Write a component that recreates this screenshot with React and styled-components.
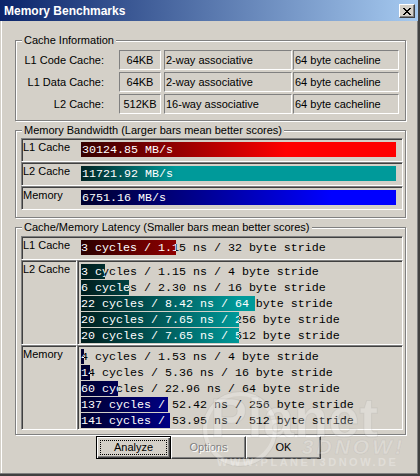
import React from "react";
import styled, { createGlobalStyle, css } from "styled-components";

const GlobalStyle = createGlobalStyle`
  html, body {
    margin: 0;
    padding: 0;
    background: #ffffff;
  }
  body {
    font-family: "Liberation Sans", Arial, sans-serif;
    font-size: 11px;
    color: #000;
  }
`;

// classic 3d edges
const sunken = css`
  box-sizing: border-box;
  border: 1px solid;
  border-color: #808080 #ffffff #ffffff #808080;
  box-shadow: inset 1px 1px 0 #404040, inset -1px -1px 0 #d4d0c8;
`;

const Window = styled.div`
  position: relative;
  width: 420px;
  height: 476px;
  box-sizing: border-box;
  background: #d4d0c8;
  border-right: 2px solid #404040;
  border-bottom: 2px solid #404040;
  box-shadow: inset -1px -1px 0 #808080, inset 1px 0 0 #d4d0c8, inset 2px 0 0 #ffffff;
  display: flex;
  flex-direction: column;
  overflow: hidden;
`;

const TitleBar = styled.div`
  height: 21px;
  box-sizing: border-box;
  padding: 0 3px 0 4px;
  display: flex;
  align-items: center;
  justify-content: space-between;
  background: linear-gradient(to right, #0a246a, #a6caf0);
`;

const Title = styled.span`
  color: #fff;
  font-weight: bold;
  font-size: 12px;
  line-height: 20px;
  padding-top: 1px;
`;

const CloseButton = styled.div`
  width: 16px;
  height: 14px;
  margin-top: 1px;
  box-sizing: border-box;
  background: #d4d0c8;
  border: 1px solid;
  border-color: #ffffff #404040 #404040 #ffffff;
  box-shadow: inset -1px -1px 0 #808080;
  display: flex;
  align-items: center;
  justify-content: center;
`;

const Content = styled.div`
  padding: 13px 12px 0 15px;
  display: flex;
  flex-direction: column;
  gap: 3px;
`;

const Group = styled.fieldset`
  margin: 0;
  padding: 0;
  min-width: 0;
  border: 1px solid #808080;
  box-shadow: inset 1px 1px 0 #ffffff, 1px 1px 0 #ffffff;
`;

const Legend = styled.legend`
  margin-left: 6px;
  padding: 0 2px;
  line-height: 13px;
  background: #d4d0c8;
`;

const GroupBody = styled.div`
  padding: ${(p) => p.$pad};
  display: flex;
  flex-direction: column;
  gap: ${(p) => p.$gap || 0}px;
`;

/* cache information */
const InfoRow = styled.div`
  display: flex;
  height: 20px;
`;

const InfoLabel = styled.div`
  width: 92px;
  padding-right: 4px;
  margin-right: 11px;
  box-sizing: border-box;
  text-align: right;
  line-height: 20px;
  white-space: nowrap;
`;

const InfoBox = styled.div`
  box-sizing: border-box;
  width: ${(p) => p.$w}px;
  margin-right: ${(p) => p.$gap || 0}px;
  border: 1px solid;
  border-color: #808080 #ffffff #ffffff #808080;
  padding: 0 1px;
  line-height: 18px;
  text-align: ${(p) => (p.$center ? "center" : "left")};
  white-space: nowrap;
  overflow: hidden;
`;

/* bars */
const Row = styled.div`
  ${sunken};
  display: flex;
  height: ${(p) => p.$h || 24}px;
`;

const Split = styled.div`
  display: flex;
`;

const Cell = styled.div`
  ${sunken};
  width: ${(p) => (p.$w ? `${p.$w}px` : "auto")};
  flex: ${(p) => (p.$w ? "none" : "1")};
  padding: ${(p) => p.$pad || 0};
`;

const RowLabel = styled.div`
  width: ${(p) => p.$w || 59}px;
  flex: none;
  box-sizing: border-box;
  padding: 2px 0 0 1px;
  line-height: 13px;
  white-space: nowrap;
`;

const mono = css`
  font-family: "Liberation Mono", "Courier New", monospace;
  font-size: 11.67px;
  white-space: nowrap;
`;

const Bar = styled.div`
  ${mono};
  width: 315px;
  height: 15px;
  margin-top: 3px;
  box-sizing: border-box;
  padding: 1px 0 0 1px;
  line-height: 15px;
  color: #fff;
  background: linear-gradient(to right, ${(p) => p.$from} 0px, ${(p) => p.$to} ${(p) => p.$span}px);
`;

const Lines = styled.div`
  padding-top: 3px;
`;

const Line = styled.div`
  ${mono};
  position: relative;
  height: 16px;
`;

const LineText = styled.div`
  height: 15px;
  box-sizing: border-box;
  padding-top: 1px;
  line-height: 15px;
  color: ${(p) => (p.$inverse ? "#fff" : "#000")};
`;

const Fill = styled.div`
  position: absolute;
  left: 0;
  top: 0;
  height: 15px;
  overflow: hidden;
  background: linear-gradient(to right, ${(p) => p.$from} 0px, ${(p) => p.$to} ${(p) => p.$span}px);
`;

/* buttons */
const ButtonRow = styled.div`
  display: flex;
  padding: 1px 0 0 96px;
`;

const Button = styled.div`
  position: relative;
  width: 75px;
  height: 23px;
  box-sizing: border-box;
  display: flex;
  align-items: center;
  justify-content: center;
  border: 1px solid;
  border-color: ${(p) => (p.$default ? "#000" : "#ffffff #404040 #404040 #ffffff")};
  box-shadow: ${(p) =>
    p.$default
      ? "inset 1px 1px 0 #ffffff, inset -1px -1px 0 #404040, inset -2px -2px 0 #808080"
      : "inset -1px -1px 0 #808080"};
  color: ${(p) => (p.$disabled ? "#808080" : "#000")};
  text-shadow: ${(p) => (p.$disabled ? "1px 1px 0 #ffffff" : "none")};
  line-height: 13px;
`;

const Focus = styled.div`
  position: absolute;
  inset: 3px;
  border: 1px dotted #000;
`;

/* watermark laid over the lower right of the dialog */
const Watermark = styled.div`
  position: absolute;
  left: 200px;
  top: 384px;
  width: 215px;
  height: 92px;
  pointer-events: none;
  font-family: "Liberation Sans", Arial, sans-serif;
  font-weight: bold;
  color: rgba(255, 255, 255, 0.24);
  -webkit-text-stroke: 1px rgba(110, 110, 110, 0.1);
`;

const Ring = styled.div`
  position: absolute;
  left: 3px;
  top: 8px;
  width: 66px;
  height: 66px;
  border-radius: 50%;
  border: 4px solid rgba(255, 255, 255, 0.26);
  box-shadow: 0 0 0 1px rgba(120, 120, 120, 0.1);
`;

const PlanetWord = styled.div`
  position: absolute;
  left: 10px;
  top: 6px;
  font-size: 56px;
  line-height: 56px;
`;

const Brand = styled.div`
  position: absolute;
  right: 10px;
  top: 52px;
  font-size: 21px;
  line-height: 21px;
  font-style: italic;
  letter-spacing: 3px;
`;

const Url = styled.div`
  position: absolute;
  left: 17px;
  top: 73px;
  font-size: 11px;
  line-height: 11px;
  letter-spacing: 2.5px;
  -webkit-text-stroke: 0;
  color: rgba(255, 255, 255, 0.3);
`;

const XGlyph = () => (
  <svg width="8" height="7" viewBox="0 0 8 7" shapeRendering="crispEdges">
    <path
      fill="#000"
      d="M0 0h2v1H0zM6 0h2v1H6zM1 1h2v1H1zM5 1h2v1H5zM2 2h4v1H2zM3 3h2v1H3zM2 4h4v1H2zM1 5h2v1H1zM5 5h2v1H5zM0 6h2v1H0zM6 6h2v1H6z"
    />
  </svg>
);

const cacheInfo = [
  ["L1 Code Cache:", "64KB", "2-way associative", "64 byte cacheline"],
  ["L1 Data Cache:", "64KB", "2-way associative", "64 byte cacheline"],
  ["L2 Cache:", "512KB", "16-way associative", "64 byte cacheline"],
];

const bandwidth = [
  { label: "L1 Cache", value: "30124.85 MB/s", from: "#340000", to: "#ff0000", span: 205 },
  { label: "L2 Cache", value: "11721.92 MB/s", from: "#002424", to: "#009a9a", span: 95 },
  { label: "Memory", value: "6751.16 MB/s", from: "#00002c", to: "#0000ff", span: 250 },
];

const red = { from: "#2a0000", to: "#ff0000", span: 200 };
const teal = { from: "#001c1c", to: "#009a9a", span: 160 };
const blue = { from: "#000030", to: "#0000ff", span: 220 };

const l2Lines = [
  ["3 cycles / 1.15 ns / 4 byte stride", 24],
  ["6 cycles / 2.30 ns / 16 byte stride", 48],
  ["22 cycles / 8.42 ns / 64 byte stride", 174],
  ["20 cycles / 7.65 ns / 256 byte stride", 158],
  ["20 cycles / 7.65 ns / 512 byte stride", 158],
];

const memLines = [
  ["4 cycles / 1.53 ns / 4 byte stride", 3],
  ["14 cycles / 5.36 ns / 16 byte stride", 9],
  ["60 cycles / 22.96 ns / 64 byte stride", 37],
  ["137 cycles / 52.42 ns / 256 byte stride", 87],
  ["141 cycles / 53.95 ns / 512 byte stride", 89],
];

const LatencyLine = ({ text, width, tone }) => (
  <Line>
    <LineText>{text}</LineText>
    <Fill $from={tone.from} $to={tone.to} $span={tone.span} style={{ width }}>
      <LineText $inverse>{text}</LineText>
    </Fill>
  </Line>
);

const LatencyBlock = ({ label, lines, tone }) => (
  <Split>
    <Cell $w={56}>
      <RowLabel $w={54}>{label}</RowLabel>
    </Cell>
    <Cell $pad="0 0 0 3px">
      <Lines>
        {lines.map(([text, w]) => (
          <LatencyLine key={text} text={text} width={w} tone={tone} />
        ))}
      </Lines>
    </Cell>
  </Split>
);

const App = () => {
  return (
    <>
      <GlobalStyle />
      <Window>
        <TitleBar>
          <Title>Memory Benchmarks</Title>
          <CloseButton>
            <XGlyph />
          </CloseButton>
        </TitleBar>

        <Content>
          <Group>
            <Legend>Cache Information</Legend>
            <GroupBody $pad="3px 0 6px 0" $gap={2}>
              {cacheInfo.map(([label, size, assoc, line]) => (
                <InfoRow key={label}>
                  <InfoLabel>{label}</InfoLabel>
                  <InfoBox $w={42} $gap={3} $center>{size}</InfoBox>
                  <InfoBox $w={128} $gap={1}>{assoc}</InfoBox>
                  <InfoBox $w={106}>{line}</InfoBox>
                </InfoRow>
              ))}
            </GroupBody>
          </Group>

          <Group>
            <Legend>Memory Bandwidth (Larger bars mean better scores)</Legend>
            <GroupBody $pad="1px 2px 7px 5px">
              {bandwidth.map((b) => (
                <Row key={b.label}>
                  <RowLabel>{b.label}</RowLabel>
                  <Bar $from={b.from} $to={b.to} $span={b.span}>{b.value}</Bar>
                </Row>
              ))}
            </GroupBody>
          </Group>

          <Group>
            <Legend>Cache/Memory Latency (Smaller bars mean better scores)</Legend>
            <GroupBody $pad="2px 2px 4px 5px">
              <Row>
                <RowLabel>L1 Cache</RowLabel>
                <Lines>
                  <LatencyLine text="3 cycles / 1.15 ns / 32 byte stride" width={95} tone={red} />
                </Lines>
              </Row>
              <LatencyBlock label="L2 Cache" lines={l2Lines} tone={teal} />
              <LatencyBlock label="Memory" lines={memLines} tone={blue} />
            </GroupBody>
          </Group>
        </Content>

        <ButtonRow>
          <Button $default>
            <Focus />
            Analyze
          </Button>
          <Button $disabled>Options</Button>
          <Button>OK</Button>
        </ButtonRow>

        <Watermark>
          <Ring />
          <PlanetWord>Planet</PlanetWord>
          <Brand>3DNOW!</Brand>
          <Url>WWW.PLANET3DNOW.DE</Url>
        </Watermark>
      </Window>
    </>
  );
};

export default App;
